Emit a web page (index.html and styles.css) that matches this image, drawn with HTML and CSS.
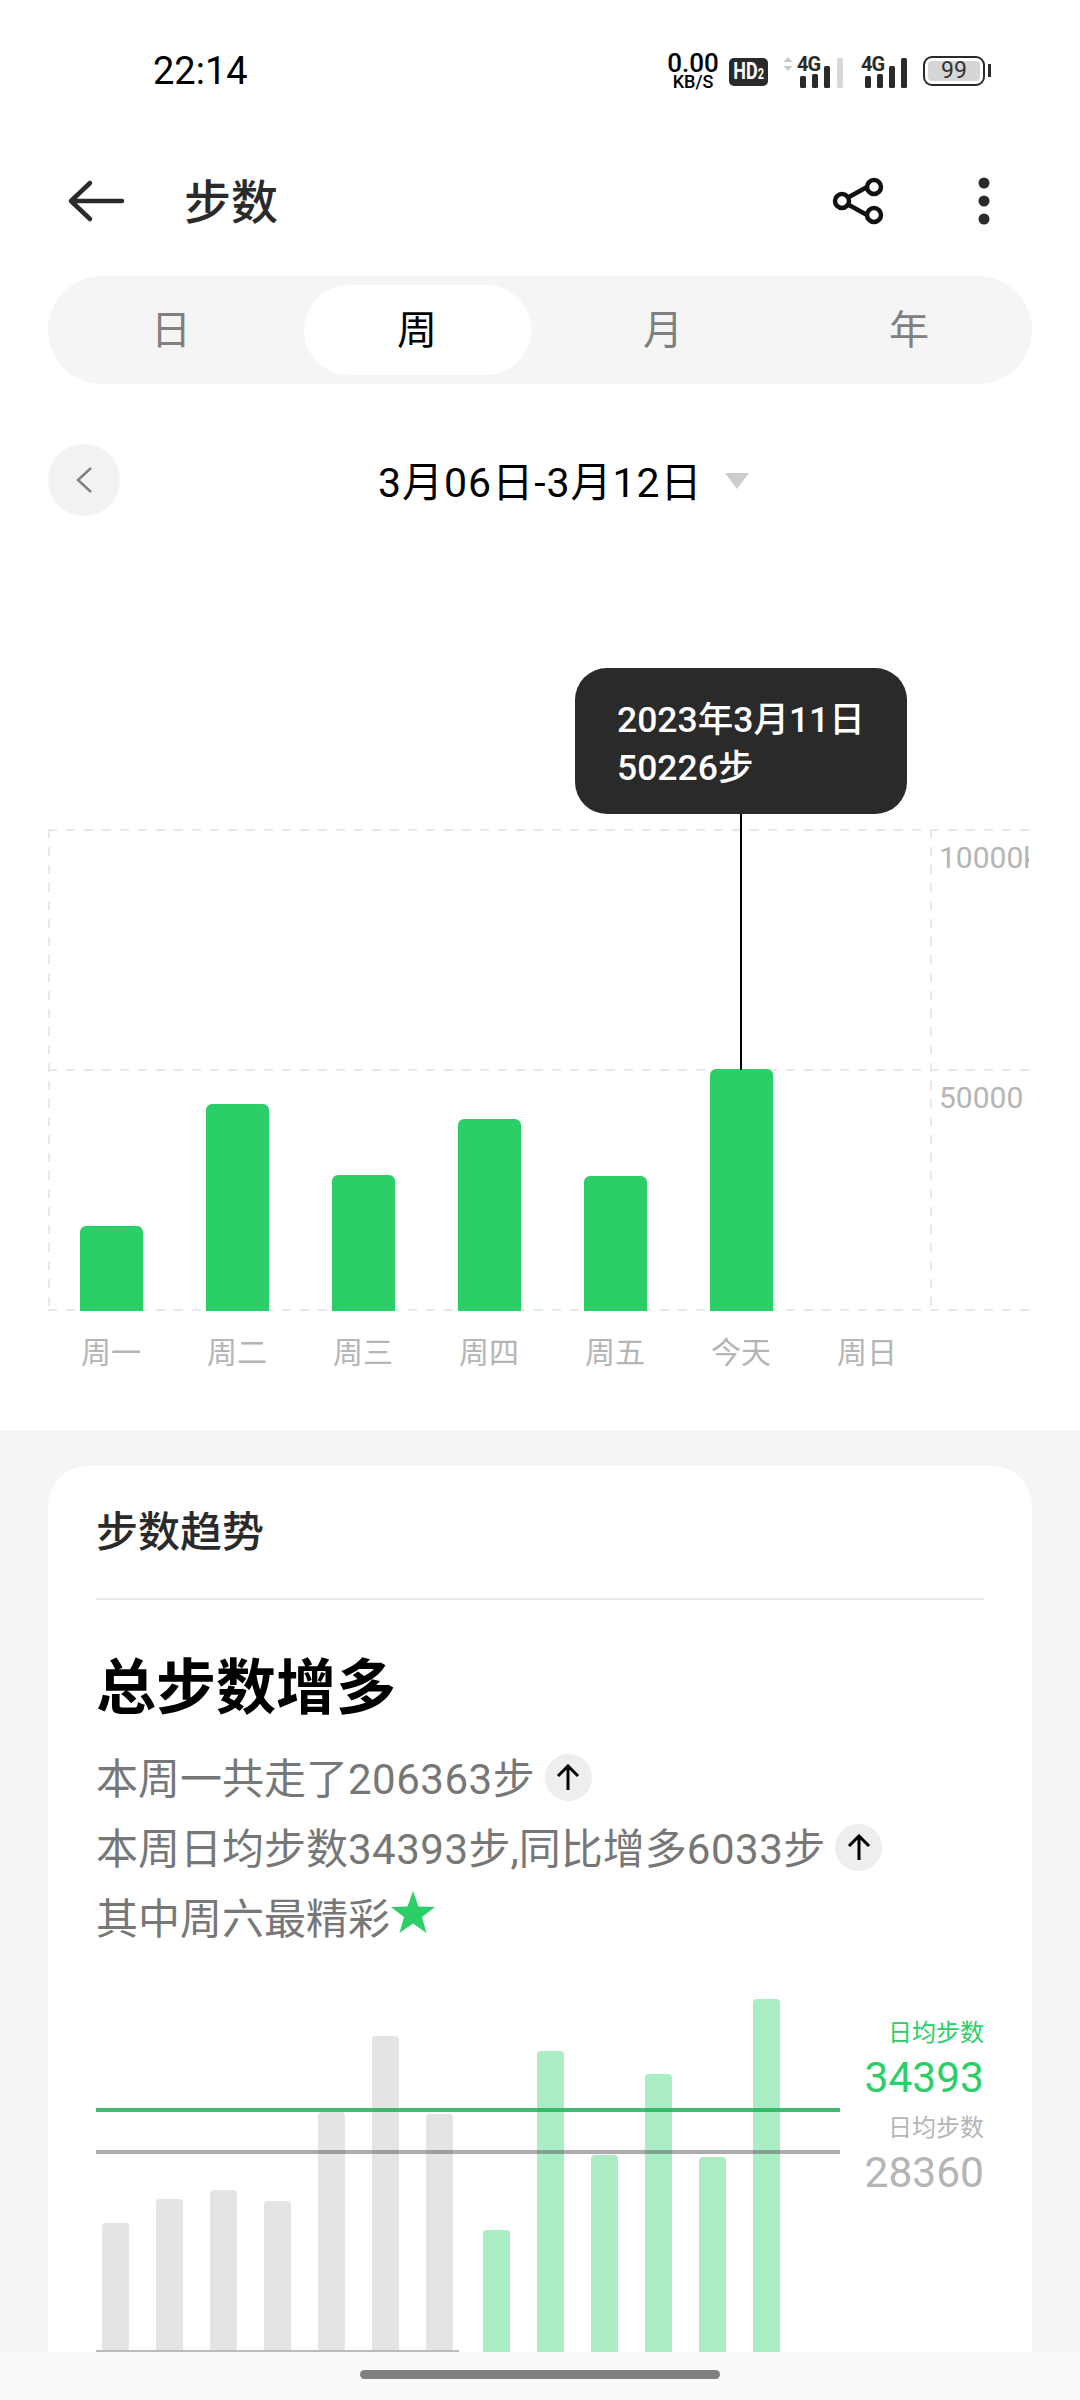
FILE: index.html
```html
<!DOCTYPE html>
<html lang="zh-CN">
<head>
  <meta charset="UTF-8">
  <title>步数</title>
  <link rel="stylesheet" href="styles.css">
</head>
<body>
  <div class="page">
    <div class="status-bar">
      <span class="clock">22:14</span>
      <div class="status-icons">
        <div class="speed"><span class="speed-num">0.00</span><span class="speed-unit">KB/S</span></div>
        <div class="hd"><span class="hd-text">HD<small>2</small></span></div>
        <svg class="signal signal-first" width="60" height="38" viewBox="0 -6 60 38">
          <path d="M5 1 L9.500 6 H0.500 Z M5 15 L9.500 10 H0.500 Z" fill="#c8c8c8"/>
          <text x="14" y="15" class="signal-text">4G</text>
          <rect x="17" y="20" width="6" height="12" rx="1.500" fill="#2a2a2a"/>
          <rect x="29" y="18" width="6" height="14" rx="1.500" fill="#2a2a2a"/>
          <rect x="41" y="10" width="6" height="22" rx="1.500" fill="#2a2a2a"/>
          <rect x="54" y="2" width="6" height="30" rx="1" fill="#d8d8d8"/>
        </svg>
        <svg class="signal" width="47" height="38" viewBox="0 -6 47 38">
          <text x="1" y="15" class="signal-text">4G</text>
          <rect x="5" y="20" width="6" height="12" rx="1.500" fill="#2a2a2a"/>
          <rect x="17" y="18" width="6" height="14" rx="1.500" fill="#2a2a2a"/>
          <rect x="29" y="10" width="6" height="22" rx="1.500" fill="#2a2a2a"/>
          <rect x="41" y="2" width="6" height="30" rx="1.500" fill="#2a2a2a"/>
        </svg>
        <div class="battery"><span class="battery-fill">99</span></div>
      </div>
    </div>

    <div class="app-bar">
      <svg class="back" width="60" height="44" viewBox="0 0 60 44">
        <path d="M56 22 H5 M24 4 L5 22 L24 40" fill="none" stroke="#2a2a2a" stroke-width="4.500" stroke-linecap="round" stroke-linejoin="round"/>
      </svg>
      <h1 class="app-title">步数</h1>
      <svg class="share" width="56" height="50" viewBox="0 0 56 50">
        <g fill="none" stroke="#111" stroke-width="4.500">
          <path d="M19 21 L37 11 M19 29 L37 39"/>
          <circle cx="12" cy="25" r="7"/>
          <circle cx="44" cy="11" r="7"/>
          <circle cx="44" cy="39" r="7"/>
        </g>
      </svg>
      <svg class="more" width="20" height="50" viewBox="0 0 20 50">
        <circle cx="10" cy="7" r="5.500" fill="#2a2a2a"/>
        <circle cx="10" cy="25" r="5.500" fill="#2a2a2a"/>
        <circle cx="10" cy="43" r="5.500" fill="#2a2a2a"/>
      </svg>
    </div>

    <div class="segments">
      <div class="segment">日</div>
      <div class="segment segment-active">周</div>
      <div class="segment">月</div>
      <div class="segment">年</div>
    </div>

    <div class="date-row">
      <div class="prev">
        <svg width="18" height="28" viewBox="0 0 18 28">
          <path d="M16 2 L3 14 L16 26" fill="none" stroke="#808080" stroke-width="2.500"/>
        </svg>
      </div>
      <span class="date-text">3月06日-3月12日</span>
      <span class="date-arrow"></span>
    </div>

    <div class="week-chart">
      <div class="tooltip">2023年3月11日<br>50226步</div>
      <div class="plot">
        <div class="plot-bars">
          <div class="bar" style="height: 85px"></div>
          <div class="bar" style="height: 207px"></div>
          <div class="bar" style="height: 136px"></div>
          <div class="bar" style="height: 192px"></div>
          <div class="bar" style="height: 135px"></div>
          <div class="bar" style="height: 242px"></div>
        </div>
        <div class="plot-axis">
          <div class="axis-label">10000k</div>
          <div class="axis-label">50000</div>
        </div>
      </div>
      <div class="days">
        <span class="day">周一</span>
        <span class="day">周二</span>
        <span class="day">周三</span>
        <span class="day">周四</span>
        <span class="day">周五</span>
        <span class="day">今天</span>
        <span class="day">周日</span>
      </div>
    </div>

    <div class="lower">
      <div class="card">
        <div class="card-title">步数趋势</div>
        <h2 class="headline">总步数增多</h2>
        <div class="summary">
          <div class="summary-line"><span>本周一共走了<span class="num">206363</span>步</span>
            <span class="up-badge">
              <svg width="24" height="28" viewBox="0 0 24 28"><path d="M12 26 V2 M2 12 L12 2 L22 12" fill="none" stroke="#000" stroke-width="3"/></svg>
            </span>
          </div>
          <div class="summary-line"><span>本周日均步数<span class="num">34393</span>步,同比增多<span class="num">6033</span>步</span>
            <span class="up-badge">
              <svg width="24" height="28" viewBox="0 0 24 28"><path d="M12 26 V2 M2 12 L12 2 L22 12" fill="none" stroke="#000" stroke-width="3"/></svg>
            </span>
          </div>
          <div class="summary-line">其中周六最精彩<svg class="star" width="46" height="44" viewBox="0 0 46 44"><path d="M23 1 L28.500 16.500 L45 17 L32 27 L36.500 43 L23 33.500 L9.500 43 L14 27 L1 17 L17.500 16.500 Z" fill="#2bce67"/></svg></div>
        </div>

        <div class="compare">
          <div class="compare-bars">
            <div class="group group-prev">
              <div class="mini-bar" style="height: 127px"></div>
              <div class="mini-bar" style="height: 151px"></div>
              <div class="mini-bar" style="height: 160px"></div>
              <div class="mini-bar" style="height: 149px"></div>
              <div class="mini-bar" style="height: 238px"></div>
              <div class="mini-bar" style="height: 314px"></div>
              <div class="mini-bar" style="height: 236px"></div>
            </div>
            <div class="group group-now">
              <div class="mini-bar" style="height: 122px"></div>
              <div class="mini-bar" style="height: 301px"></div>
              <div class="mini-bar" style="height: 197px"></div>
              <div class="mini-bar" style="height: 278px"></div>
              <div class="mini-bar" style="height: 195px"></div>
              <div class="mini-bar" style="height: 353px"></div>
            </div>
            <div class="avg-line avg-now"></div>
            <div class="avg-line avg-prev"></div>
          </div>
          <div class="legend">
            <div class="legend-label legend-now">日均步数</div>
            <div class="legend-num legend-now">34393</div>
            <div class="legend-label legend-second">日均步数</div>
            <div class="legend-num">28360</div>
          </div>
        </div>
      </div>
    </div>

    <div class="nav-bar"><div class="nav-handle"></div></div>
  </div>
</body>
</html>
```

FILE: styles.css
```css
* {
  box-sizing: border-box;
}
body {
  margin: 0;
  background: #fff;
  font-family: Roboto, "Noto Sans CJK SC", sans-serif;
  color: #000;
}
.page {
  position: relative;
  width: 1080px;
  height: 2400px;
  overflow: hidden;
}

/* status bar */
.status-bar {
  height: 142px;
  padding: 0 95px 0 153px;
  display: flex;
  align-items: center;
  justify-content: space-between;
}
.clock {
  font-size: 38px;
}
.status-icons {
  display: flex;
  align-items: center;
}
.speed {
  width: 54px;
  display: flex;
  flex-direction: column;
  align-items: center;
  font-weight: 500;
}
.speed-num {
  font-size: 26px;
  line-height: 20px;
}
.speed-unit {
  font-size: 18px;
  line-height: 17px;
}
.hd {
  width: 39px;
  height: 28px;
  margin: 2px 0 0 9px;
  background: #2a2a2a;
  border-radius: 5px;
  color: #fff;
  font-size: 23px;
  font-weight: 700;
  line-height: 28px;
  text-align: center;
  white-space: nowrap;
}
.hd-text {
  display: inline-block;
  transform: scaleX(0.78);
  margin: 0 -6px;
}
.hd small {
  font-size: 14px;
}
.signal-first {
  margin-left: 15px;
}
.signal {
  display: block;
  margin-top: -4px;
}
.signal + .signal {
  margin-left: 17px;
}
.signal-text {
  font-size: 20px;
  font-weight: 700;
  letter-spacing: -1px;
  fill: #2a2a2a;
}
.battery {
  position: relative;
  width: 62px;
  height: 30px;
  margin-left: 16px;
  padding: 3px;
  border: 2.500px solid #2a2a2a;
  border-radius: 9px;
}
.battery::after {
  content: "";
  position: absolute;
  right: -8px;
  top: 6px;
  width: 3px;
  height: 13px;
  background: #2a2a2a;
}
.battery-fill {
  display: block;
  height: 100%;
  background: #d6d6d6;
  border-radius: 4px;
  font-size: 23px;
  line-height: 19px;
  text-align: center;
  color: #333;
}

/* title row */
.app-bar {
  height: 118px;
  padding: 0 86px 0 66px;
  display: flex;
  align-items: center;
}
.app-title {
  margin: -5px 0 0 58px;
  font-size: 47px;
  font-weight: 500;
  color: #2a2a2a;
}
.share {
  margin-left: auto;
}
.more {
  margin-left: 88px;
}

/* day / week / month / year */
.segments {
  height: 108px;
  margin: 16px 48px 0;
  padding: 9px 0;
  display: grid;
  grid-template-columns: repeat(4, 1fr);
  background: #f5f5f5;
  border-radius: 54px;
}
.segment {
  width: 227px;
  height: 90px;
  margin: 0 auto;
  border-radius: 45px;
  font-size: 40px;
  line-height: 92px;
  text-align: center;
  color: #808080;
}
.segment-active {
  background: #fff;
  color: #000;
}

.date-row {
  margin: 60px 48px 0;
  display: flex;
  align-items: center;
}
.prev {
  width: 72px;
  height: 72px;
  display: flex;
  align-items: center;
  justify-content: center;
  background: #f2f2f2;
  border-radius: 50%;
}
.date-text {
  margin: -2px 0 0 258px;
  font-size: 41px;
  letter-spacing: 1px;
}
.date-arrow {
  width: 0;
  height: 0;
  margin: 2px 0 0 22px;
  border-left: 12px solid transparent;
  border-right: 12px solid transparent;
  border-top: 16px solid #ccc;
}

/* week chart */
.week-chart {
  position: relative;
  margin: 313px 51px 0 48px;
  height: 601px;
}
.tooltip {
  position: absolute;
  left: 527px;
  top: -161px;
  width: 332px;
  height: 146px;
  padding: 28px 0 0 42px;
  background: #2a2a2a;
  border-radius: 32px;
  color: #fff;
  font-size: 35.500px;
  font-weight: 500;
  line-height: 48px;
}
.tooltip::after {
  content: "";
  position: absolute;
  left: 165px;
  top: 146px;
  width: 2px;
  height: 256px;
  background: #000;
}
.plot {
  height: 482px;
  display: flex;
  background:
    linear-gradient(to right, #e8e8e8 50%, transparent 50%) 0 0 / 18px 2px repeat-x,
    linear-gradient(to right, #e8e8e8 50%, transparent 50%) 0 240px / 18px 2px repeat-x,
    linear-gradient(to right, #e8e8e8 50%, transparent 50%) 0 480px / 18px 2px repeat-x,
    linear-gradient(to bottom, #e8e8e8 50%, transparent 50%) 0 0 / 2px 18px repeat-y,
    linear-gradient(to bottom, #e8e8e8 50%, transparent 50%) 882px 0 / 2px 18px repeat-y;
}
.plot-bars {
  width: 882px;
  padding-left: 32px;
  display: flex;
  align-items: flex-end;
  gap: 63px;
}
.bar {
  width: 63px;
  background: #2bce67;
  border-radius: 6px 6px 0 0;
}
.plot-axis {
  flex: 1;
  padding-left: 9px;
  overflow: hidden;
}
.axis-label {
  height: 240px;
  padding-top: 11px;
  font-size: 30px;
  line-height: 36px;
  color: #b5b5b5;
}
.days {
  height: 78px;
  display: flex;
  align-items: center;
}
.day {
  width: 126px;
  font-size: 30px;
  text-align: center;
  color: #b5b5b5;
}

/* lower card */
.lower {
  height: 970px;
  padding: 36px 48px 0;
  background: #f5f5f5;
}
.card {
  height: 934px;
  padding: 0 48px;
  background: #fff;
  border-radius: 40px 40px 0 0;
}
.card-title {
  height: 134px;
  border-bottom: 2px solid #eaeaea;
  font-size: 42px;
  font-weight: 500;
  line-height: 134px;
  color: #2a2a2a;
}
.headline {
  margin: 49px 0 0;
  font-size: 60px;
  font-weight: 700;
  line-height: 80px;
}
.summary {
  margin-top: 11px;
}
.summary-line {
  height: 70px;
  display: flex;
  align-items: center;
  font-size: 42px;
  color: #777;
  white-space: nowrap;
}
.num {
  letter-spacing: 0.500px;
}
.up-badge {
  width: 47px;
  height: 47px;
  margin: 5px 0 0 10px;
  display: flex;
  align-items: center;
  justify-content: center;
  background: #eee;
  border-radius: 50%;
}
.star {
  margin: -6px 0 0 0;
}

/* this week / last week comparison */
.compare {
  height: 353px;
  margin-top: 49px;
  display: flex;
  justify-content: space-between;
}
.compare-bars {
  position: relative;
  width: 744px;
  display: flex;
  align-items: flex-end;
}
.group {
  display: flex;
  align-items: flex-end;
  gap: 27px;
}
.group-prev {
  padding: 0 6px;
  border-bottom: 2px solid #bbb;
}
.group-now {
  margin-left: 24px;
}
.mini-bar {
  width: 27px;
  border-radius: 4px 4px 0 0;
}
.group-prev .mini-bar {
  background: #e4e4e4;
}
.group-now .mini-bar {
  background: #aaedc4;
}
.avg-line {
  position: absolute;
  left: 0;
  width: 744px;
  height: 4px;
}
.avg-now {
  top: 109px;
  background: rgba(30, 178, 88, 0.85);
}
.avg-prev {
  top: 151px;
  background: rgba(90, 90, 90, 0.5);
}
.legend {
  padding-top: 19px;
  text-align: right;
  color: #b5b5b5;
}
.legend-label {
  font-size: 24px;
  line-height: 30px;
}
.legend-second {
  margin-top: 5px;
}
.legend-num {
  font-size: 42.500px;
  line-height: 60px;
}
.legend-now {
  color: #2bce67;
}

.nav-bar {
  position: absolute;
  left: 0;
  right: 0;
  bottom: 0;
  height: 48px;
  padding-top: 18px;
  background: #fafafa;
}
.nav-handle {
  width: 360px;
  height: 9px;
  margin: 0 auto;
  background: #808080;
  border-radius: 5px;
}
```
